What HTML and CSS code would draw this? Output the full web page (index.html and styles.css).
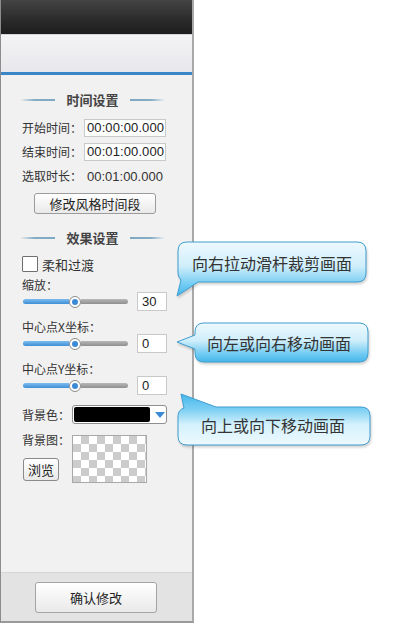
FILE: index.html
```html
<!DOCTYPE html>
<html lang="zh-CN">
<head>
<meta charset="utf-8">
<title>效果设置</title>
<link rel="stylesheet" href="styles.css">
</head>
<body>
<div class="panel">
  <div class="topbar"></div>
  <div class="subbar"></div>
  <div class="content">
    <div class="sec-title"><span class="line l"></span><span class="t">时间设置</span><span class="line r"></span></div>
    <div class="row time first"><span class="lbl">开始时间：</span><span class="input time-in">00:00:00.000</span></div>
    <div class="row time"><span class="lbl">结束时间：</span><span class="input time-in">00:01:00.000</span></div>
    <div class="row time"><span class="lbl">选取时长：</span><span class="plain">00:01:00.000</span></div>
    <div class="btn btn-seg">修改风格时间段</div>

    <div class="sec-title s2"><span class="line l"></span><span class="t">效果设置</span><span class="line r"></span></div>
    <div class="row check"><span class="box"></span><span class="ck-lbl">柔和过渡</span></div>

    <div class="slabel first">缩放：</div>
    <div class="srow"><div class="slider"><span class="fill"></span><span class="thumb"></span><span class="rest"></span></div><span class="input num">30</span></div>
    <div class="slabel">中心点X坐标：</div>
    <div class="srow"><div class="slider"><span class="fill"></span><span class="thumb"></span><span class="rest"></span></div><span class="input num">0</span></div>
    <div class="slabel">中心点Y坐标：</div>
    <div class="srow"><div class="slider"><span class="fill"></span><span class="thumb"></span><span class="rest"></span></div><span class="input num">0</span></div>

    <div class="row color"><span class="lbl short">背景色：</span><span class="select"><span class="swatch"></span><span class="arrow"></span></span></div>
    <div class="row bgimg">
      <div class="bgcol"><span class="lbl">背景图：</span><span class="btn btn-browse">浏览</span></div>
      <div class="checker"></div>
    </div>
  </div>
  <div class="footer"><div class="btn btn-ok">确认修改</div></div>
</div>

<div class="bubble b1">
  <svg class="shape" width="196" height="58" viewBox="0 0 196 58">
    <defs><linearGradient id="g1" x1="0" y1="0" x2="0" y2="1"><stop offset="0" stop-color="#eef9fe"/><stop offset="0.45" stop-color="#cfeefb"/><stop offset="0.8" stop-color="#6fcaf2"/><stop offset="1" stop-color="#45b7ea"/></linearGradient></defs>
    <path d="M11 2 H181 Q190 2 190 11 V33 Q190 42 181 42 H22 L1 56 L5 40 Q2 37 2 33 V11 Q2 2 11 2 Z" fill="url(#g1)" stroke="#3f9dcf" stroke-width="1"/>
  </svg>
  <span class="btext">向右拉动滑杆裁剪画面</span>
</div>
<div class="bubble b2">
  <svg class="shape" width="196" height="44" viewBox="0 0 196 44">
    <defs><linearGradient id="g2" x1="0" y1="0" x2="0" y2="1"><stop offset="0" stop-color="#eef9fe"/><stop offset="0.45" stop-color="#cfeefb"/><stop offset="0.8" stop-color="#6fcaf2"/><stop offset="1" stop-color="#45b7ea"/></linearGradient></defs>
    <path d="M29 2 H184 Q193 2 193 11 V32 Q193 41 184 41 H29 Q20 41 20 32 V28 L2 21 L20 14 V11 Q20 2 29 2 Z" fill="url(#g2)" stroke="#3f9dcf" stroke-width="1"/>
  </svg>
  <span class="btext">向左或向右移动画面</span>
</div>
<div class="bubble b3">
  <svg class="shape" width="196" height="56" viewBox="0 0 196 56">
    <defs><linearGradient id="g3" x1="0" y1="0" x2="0" y2="1"><stop offset="0" stop-color="#45b7ea"/><stop offset="0.3" stop-color="#7ccff3"/><stop offset="0.6" stop-color="#d4f1fc"/><stop offset="1" stop-color="#eef9fe"/></linearGradient></defs>
    <path d="M5 2 L40 15 H185 Q194 15 194 24 V44 Q194 53 185 53 H11 Q2 53 2 44 V24 Q2 18 8 16 Z" fill="url(#g3)" stroke="#3f9dcf" stroke-width="1"/>
  </svg>
  <span class="btext">向上或向下移动画面</span>
</div>
</body>
</html>
```

FILE: styles.css
```css
* { box-sizing: border-box; }
html, body { margin: 0; padding: 0; background: #ffffff; }
body {
  width: 400px; height: 623px; position: relative; overflow: hidden;
  font-family: "Noto Sans CJK SC", "Liberation Sans", sans-serif;
  font-size: 12px; color: #333;
}
.panel {
  width: 194px; height: 623px;
  border-left: 1px solid #8c8c8c;
  border-right: 2px solid #a9a9a9;
  border-bottom: 2px solid #9a9a9a;
  display: flex; flex-direction: column;
  background: #f1f1f1;
}
.topbar {
  height: 34px;
  background: linear-gradient(#444444, #2a2a2a 60%, #1d1d1d);
}
.subbar {
  height: 41px;
  background: linear-gradient(#f3f3f5, #e8e8ec);
  border-top: 1px solid #d4d4d6;
  border-bottom: 3px solid #3a86c6;
}
.content { flex: 1; padding-left: 21px; display: flex; flex-direction: column; }
.sec-title {
  margin-top: 16px; margin-left: -2px; width: 145px; height: 18px;
  display: flex; align-items: center; gap: 11px;
}
.sec-title.s2 { margin-top: 15px; }
.sec-title .t { font-weight: bold; font-size: 13px; color: #444; line-height: 18px; white-space: nowrap; width: 53px; text-align: center; }
.sec-title .line { display: block; width: 35px; height: 2px; }
.sec-title .line.l { background: linear-gradient(90deg, rgba(140,175,200,0), #86adc6 40%, #7fa8c2); }
.sec-title .line.r { background: linear-gradient(90deg, #7fa8c2, #86adc6 60%, rgba(140,175,200,0)); }

.row { display: flex; align-items: center; }
.row.time { height: 18px; margin-top: 6px; }
.row.time.first { margin-top: 10px; }
.lbl { width: 62px; line-height: 14px; white-space: nowrap; }
.lbl.short { width: 50px; }
.input {
  display: block; background: #fff; border: 1px solid #c9c9c9;
  font-family: "Liberation Sans", Arial, sans-serif; font-size: 13px; color: #222;
  line-height: 16px; padding-left: 2px;
}
.time-in { width: 82px; height: 18px; letter-spacing: 0.1px; }
.plain { font-family: "Liberation Sans", Arial, sans-serif; font-size: 13px; color: #333; padding-left: 3px; }

.btn {
  display: flex; align-items: center; justify-content: center;
  background: linear-gradient(#ffffff, #f4f4f4 50%, #e9e9e9);
  border: 1px solid #9c9c9c; border-radius: 3px;
  font-size: 13px; color: #222;
}
.btn-seg { margin-top: 8px; margin-left: 12px; width: 122px; height: 21px; }

.row.check { margin-top: 9px; height: 16px; }
.box { display: block; width: 16px; height: 16px; background: #fff; border: 1px solid #6f6f6f; border-radius: 1px; }
.ck-lbl { margin-left: 4px; font-size: 13px; }

.slabel { margin-top: 9px; height: 14px; line-height: 14px; }
.slabel.first { margin-top: 6px; }
.srow { height: 19px; display: flex; align-items: center; margin-left: 1px; }
.slider { width: 105px; display: flex; align-items: center; }
.fill { display: block; width: 46px; height: 5px; border-radius: 3px 0 0 3px; background: linear-gradient(#7dbdf0, #3f8ed6); }
.thumb {
  display: flex; align-items: center; justify-content: center;
  width: 12px; height: 12px; border-radius: 50%;
  background: #fff; border: 1px solid #8a8a8a;
}
.thumb::after { content: ""; width: 6px; height: 6px; border-radius: 50%; background: #3a8ad6; }
.rest { display: block; flex: 1; height: 5px; border-radius: 0 3px 3px 0; background: linear-gradient(#b8b8b8, #8f8f8f); }
.num { margin-left: 9px; width: 30px; height: 19px; line-height: 17px; padding-left: 4px; }

.row.color { margin-top: 10px; height: 19px; }
.select {
  display: flex; align-items: center; width: 95px; height: 19px;
  border: 1px solid #8e8e8e; border-radius: 3px; background: #fff; padding: 1px;
}
.swatch { display: block; width: 76px; height: 15px; background: #000; border-radius: 2px; }
.arrow { display: block; margin-left: 5px; width: 0; height: 0; border-left: 5px solid transparent; border-right: 5px solid transparent; border-top: 6px solid #3a8ad6; }

.row.bgimg { margin-top: 9px; align-items: flex-start; }
.bgcol { width: 50px; display: flex; flex-direction: column; }
.bgcol .lbl { margin-top: 0; }
.btn-browse { margin-top: 11px; margin-left: 1px; width: 36px; height: 23px; font-size: 13px; border-color: #8a8a8a; }
.checker {
  margin-top: 2px; width: 75px; height: 48px; border: 1px solid #a8a8a8;
  background-color: #fff;
  background-image:
    linear-gradient(45deg, #cccccc 25%, transparent 25%, transparent 75%, #cccccc 75%),
    linear-gradient(45deg, #cccccc 25%, transparent 25%, transparent 75%, #cccccc 75%);
  background-size: 16px 16px; background-position: 0 0, 8px 8px;
}

.footer { height: 49px; background: #e3e3e3; border-top: 1px solid #d6d6d6; padding-top: 9px; }
.btn-ok { margin-left: 34px; width: 122px; height: 31px; border-color: #a4a4a4; font-size: 13px; }

.bubble { position: absolute; }
.bubble .shape { position: absolute; left: 0; top: 0; filter: drop-shadow(1px 2px 1px rgba(0,0,0,0.18)); }
.btext { position: absolute; font-size: 16px; color: #333; white-space: nowrap; line-height: 20px; }
.b1 { left: 176px; top: 240px; width: 196px; height: 58px; }
.b1 .btext { left: 16px; top: 13px; }
.b2 { left: 175px; top: 321px; width: 196px; height: 44px; }
.b2 .btext { left: 32px; top: 12px; }
.b3 { left: 176px; top: 392px; width: 196px; height: 56px; }
.b3 .btext { left: 25px; top: 23px; }
```
